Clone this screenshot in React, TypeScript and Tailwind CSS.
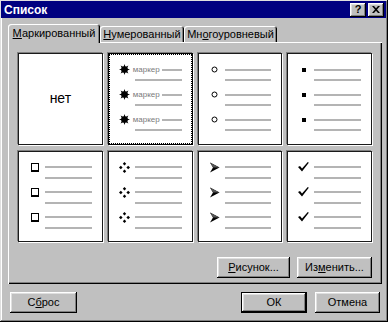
import React from "react";

const raised =
  "bg-[#c0c0c0] shadow-[inset_-1px_-1px_#000,inset_1px_1px_#fff,inset_-2px_-2px_#808080,inset_2px_2px_#dfdfdf]";

const Btn = ({ children, w, def }: { children: React.ReactNode; w: string; def?: boolean }) => (
  <div className={`${w} h-[21px] ${def ? "border border-black" : ""}`}>
    <div className={`${raised} w-full h-full flex items-center justify-center text-[11px] text-black`}>
      {children}
    </div>
  </div>
);

const Line = ({ className = "" }: { className?: string }) => (
  <div className={`h-[2px] bg-[#b4b4b4] ${className}`} />
);

const Star = () => {
  const pts: string[] = [];
  for (let i = 0; i < 16; i++) {
    const r = i % 2 === 0 ? 5.5 : 2.6;
    const a = (Math.PI * 2 * i) / 16;
    pts.push(`${(5.5 + r * Math.cos(a)).toFixed(2)},${(5.5 + r * Math.sin(a)).toFixed(2)}`);
  }
  return (
    <svg width="11" height="11" viewBox="0 0 11 11">
      <polygon points={pts.join(" ")} fill="#000" />
      <circle cx="5.5" cy="5.5" r="3.3" fill="#000" />
    </svg>
  );
};

const Circle = () => (
  <svg width="7" height="7" viewBox="0 0 7 7">
    <circle cx="3.5" cy="3.5" r="2.5" fill="none" stroke="#000" strokeWidth="1" />
  </svg>
);

const Square = () => <div className="w-[4px] h-[4px] bg-black" />;

const HollowSquare = () => (
  <div className="w-[8px] h-[9px] border border-black border-b-2 bg-white" />
);

const Diamonds = () => (
  <svg width="11" height="11" viewBox="0 0 11 11">
    <path d="M5.5 0 L7.2 1.8 L5.5 3.6 L3.8 1.8 Z" fill="#000" />
    <path d="M5.5 7.4 L7.2 9.2 L5.5 11 L3.8 9.2 Z" fill="#000" />
    <path d="M1.8 3.8 L3.6 5.5 L1.8 7.2 L0 5.5 Z" fill="#000" />
    <path d="M9.2 3.8 L11 5.5 L9.2 7.2 L7.4 5.5 Z" fill="#000" />
  </svg>
);

const Arrow = () => (
  <svg width="11" height="11" viewBox="0 0 11 11">
    <path d="M1 0.5 L10.5 5.5 L1 10.5 L4 5.5 Z" fill="#000" />
    <path d="M1 0.5 L10.5 5.5 L4 5.5 Z" fill="#555" />
  </svg>
);

const Check = () => (
  <svg width="11" height="10" viewBox="0 0 11 10">
    <path d="M0 5 L2 4 L4 6.5 L9.8 0 L10.8 0.8 L4 9.5 Z" fill="#000" />
  </svg>
);

const Group = ({ bullet, label }: { bullet: React.ReactNode; label?: boolean }) => (
  <div className="h-[25px]">
    <div className="flex items-center h-[9px]">
      <div className="w-[11px] flex justify-center items-center">{bullet}</div>
      {label ? (
        <>
          <span className="ml-[3px] text-[8px] leading-none text-[#7a7a7a]">маркер</span>
          <Line className="ml-[2px] flex-1" />
        </>
      ) : (
        <Line className="ml-[5px] flex-1" />
      )}
    </div>
    <Line className="mt-[5px] ml-[16px]" />
  </div>
);

const Cell = ({ children, selected }: { children: React.ReactNode; selected?: boolean }) =>
  selected ? (
    <div className="bg-white border border-black shadow-[-1px_-1px_0_#808080,1px_1px_0_#fff]">
      <div className="h-full border border-dotted border-black px-[9px] pt-[10px]">{children}</div>
    </div>
  ) : (
    <div className="bg-white border border-[#1a1a1a] px-[10px] pt-[11px] shadow-[-1px_-1px_0_#808080,1px_1px_0_#fff]">
      {children}
    </div>
  );

const List = ({ b, label }: { b: React.ReactNode; label?: boolean }) => (
  <>
    <Group bullet={b} label={label} />
    <Group bullet={b} label={label} />
    <Group bullet={b} label={label} />
  </>
);

export default function App() {
  return (
    <div className="w-[388px] h-[322px] bg-[#c0c0c0] font-['Liberation_Sans',Arial,sans-serif] text-black shadow-[inset_-1px_-1px_#000,inset_1px_1px_#dfdfdf,inset_-2px_-2px_#808080,inset_2px_2px_#fff] pt-[1px] pl-[1px] pr-[2px] overflow-hidden">
      {/* title bar */}
      <div className="h-[17px] bg-[#000080] flex items-center justify-between pl-[3px] pr-[2px]">
        <span className="text-white font-bold text-[12px] leading-none">Список</span>
        <div className="flex gap-[2px]">
          <div className={`${raised} w-[16px] h-[14px] flex items-center justify-center text-[11px] font-bold leading-none`}>?</div>
          <div className={`${raised} w-[16px] h-[14px] flex items-center justify-center`}>
            <svg width="8" height="7" viewBox="0 0 8 7">
              <path d="M0 0 L2 0 L4 2.3 L6 0 L8 0 L5 3.5 L8 7 L6 7 L4 4.7 L2 7 L0 7 L3 3.5 Z" fill="#000" />
            </svg>
          </div>
        </div>
      </div>

      {/* tabs */}
      <div className="mt-[6px] h-[18px] pl-[7px] flex items-end">
        <div className="relative z-10 -mb-[1px] h-[19px] w-[92px] rounded-t-[3px] bg-[#c0c0c0] shadow-[inset_1px_1px_#fff,inset_-1px_0_#000,inset_-2px_0_#808080] flex items-center justify-center text-[11px]">
          <span>
            <span className="underline">М</span>аркированный
          </span>
        </div>
        <div className="h-[16px] w-[84px] rounded-t-[3px] bg-[#c0c0c0] shadow-[inset_1px_1px_#fff,inset_-1px_0_#000,inset_-2px_0_#808080] flex items-center justify-center text-[11px]">
          <span>
            <span className="underline">Н</span>умерованный
          </span>
        </div>
        <div className="h-[16px] w-[93px] rounded-t-[3px] bg-[#c0c0c0] shadow-[inset_1px_1px_#fff,inset_-1px_0_#000,inset_-2px_0_#808080] flex items-center justify-center text-[11px]">
          <span>
            Мн<span className="underline">о</span>гоуровневый
          </span>
        </div>
      </div>

      {/* panel */}
      <div className="ml-[7px] w-[374px] h-[242px] shadow-[inset_1px_1px_#fff,inset_-1px_-1px_#000,inset_-2px_-2px_#808080] pt-[11px] pl-[10px]">
        <div className="w-[354px] h-[189px] grid grid-cols-4 grid-rows-2 gap-x-[5px] gap-y-[6px]">
          <div className="bg-white border border-[#1a1a1a] flex items-center justify-center shadow-[-1px_-1px_0_#808080,1px_1px_0_#fff]">
            <span className="text-[14px]">нет</span>
          </div>
          <Cell selected>
            <List b={<Star />} label />
          </Cell>
          <Cell>
            <List b={<Circle />} />
          </Cell>
          <Cell>
            <List b={<Square />} />
          </Cell>
          <Cell>
            <List b={<HollowSquare />} />
          </Cell>
          <Cell>
            <List b={<Diamonds />} />
          </Cell>
          <Cell>
            <List b={<Arrow />} />
          </Cell>
          <Cell>
            <List b={<Check />} />
          </Cell>
        </div>
        <div className="w-[354px] mt-[15px] flex justify-end gap-[7px]">
          <Btn w="w-[73px]">
            <span>
              <span className="underline">Р</span>исунок...
            </span>
          </Btn>
          <Btn w="w-[75px]">
            <span>
              Из<span className="underline">м</span>енить...
            </span>
          </Btn>
        </div>
      </div>

      {/* bottom buttons */}
      <div className="mt-[8px] flex pl-[9px] pr-[6px]">
        <Btn w="w-[67px]">
          <span>
            С<span className="underline">б</span>рос
          </span>
        </Btn>
        <div className="ml-auto flex gap-[8px]">
          <Btn w="w-[66px]" def>
            ОК
          </Btn>
          <Btn w="w-[65px]">Отмена</Btn>
        </div>
      </div>
    </div>
  );
}
